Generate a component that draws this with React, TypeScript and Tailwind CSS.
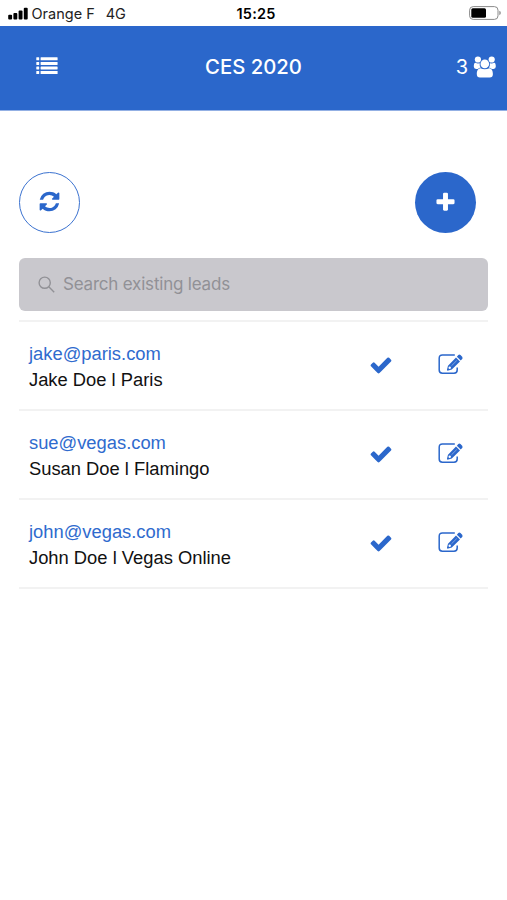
import type { ReactNode } from 'react'

const leads = [
  { email: 'jake@paris.com', name: 'Jake Doe', company: 'Paris' },
  { email: 'sue@vegas.com', name: 'Susan Doe', company: 'Flamingo' },
  { email: 'john@vegas.com', name: 'John Doe', company: 'Vegas Online' },
]

function Icon({ className, children }: { className?: string; children: ReactNode }) {
  return (
    <svg viewBox="0 0 1792 1792" fill="currentColor" className={className}>
      {children}
    </svg>
  )
}

function RefreshIcon() {
  return (
    <Icon className="mb-0.5 size-[23px]">
      <path d="M1639 1056q0 5-1 7-64 268-268 434.5t-478 166.5q-146 0-282.5-55t-243.5-157l-129 129q-19 19-45 19t-45-19-19-45v-448q0-26 19-45t45-19h448q26 0 45 19t19 45-19 45l-137 137q71 66 161 102t187 36q134 0 250-65t186-179q11-17 53-117 8-23 30-23h192q13 0 22.5 9.5t9.5 22.5zm25-800v448q0 26-19 45t-45 19h-448q-26 0-45-19t-19-45 19-45l138-138q-148-137-349-137-134 0-250 65t-186 179q-11 17-53 117-8 23-30 23h-199q-13 0-22.5-9.5t-9.5-22.5v-7q65-268 270-434.5t480-166.5q146 0 284 55.5t245 156.5l130-129q19-19 45-19t45 19 19 45z" />
    </Icon>
  )
}

function PlusIcon() {
  return (
    <Icon className="size-[23px]">
      <path d="M1600 736v192q0 40-28 68t-68 28h-416v416q0 40-28 68t-68 28h-192q-40 0-68-28t-28-68v-416h-416q-40 0-68-28t-28-68v-192q0-40 28-68t68-28h416v-416q0-40 28-68t68-28h192q40 0 68 28t28 68v416h416q40 0 68 28t28 68z" />
    </Icon>
  )
}

function CheckIcon() {
  return (
    <Icon className="size-[24px]">
      <path d="M1671 566q0 40-28 68l-724 724-136 136q-28 28-68 28t-68-28l-136-136-362-362q-28-28-28-68t28-68l136-136q28-28 68-28t68 28l294 295 656-657q28-28 68-28t68 28l136 136q28 28 28 68z" />
    </Icon>
  )
}

function EditIcon() {
  return (
    <svg viewBox="0 0 25 22" className="mb-0.5 h-[22px] w-[25px]" fill="none">
      <path d="M16.8 2H4.4Q1.2 2 1.2 5.2V17Q1.2 20.2 4.4 20.2H16Q19.2 20.2 19.2 17V14.4" stroke="currentColor" strokeWidth="1.5" />
      <path
        d="M9.4 17.6Q8.8 17.4 9 16.6L10 12.7L18 4.4L22 8.4L13.8 16.6L10.3 17.6Q9.7 17.8 9.4 17.6Z"
        fill="currentColor"
      />
      <path d="M18.9 3.7L20.3 2.1Q21.4 1 22.5 2.1L24.2 3.8Q25 5 24.2 6.1L22.7 7.5Z" fill="currentColor" />
      <path d="M13.4 12.9L18.8 7.5" stroke="white" strokeWidth="0.4" />
      <circle cx="11.7" cy="14.8" r="1.2" fill="white" />
    </svg>
  )
}

function ListIcon() {
  return (
    <svg viewBox="0 0 22 18" className="h-[18px] w-[22px]" fill="currentColor">
      {[0.3, 4.9, 9.5, 14.1].map((y) => (
        <g key={y}>
          <rect x="0.3" y={y} width="2.9" height="3" rx="0.4" />
          <rect x="4.6" y={y} width="17" height="3" rx="0.4" />
        </g>
      ))}
    </svg>
  )
}

function GroupIcon() {
  return (
    <svg viewBox="0 0 24 22" className="h-[22px] w-6" fill="currentColor">
      <circle cx="4.9" cy="3.5" r="3.1" />
      <circle cx="18.7" cy="3.5" r="3.1" />
      <path d="M0.8 10.5C0.8 8.3 1.3 6.9 2.4 6.8C3.3 7.3 4.1 7.5 4.9 7.5L6.7 7.2Q6.3 10 7.8 11.5Q6 11.6 4.8 12.9H3.1Q0.8 12.9 0.8 10.5Z" />
      <path d="M22.8 10.5C22.8 8.3 22.3 6.9 21.2 6.8C20.3 7.3 19.5 7.5 18.7 7.5L16.9 7.2Q17.3 10 15.8 11.5Q17.6 11.6 18.8 12.9H20.5Q22.8 12.9 22.8 10.5Z" />
      <circle cx="11.8" cy="7.9" r="4.3" />
      <path d="M7.5 12.2Q9.4 13.3 11.8 13.3Q14.3 13.3 16.2 12.2C19 12.2 19.9 15.4 19.9 18Q19.9 21.5 16.7 21.5H7Q3.8 21.5 3.8 18C3.8 15.4 4.7 12.2 7.5 12.2Z" />
    </svg>
  )
}

function SearchIcon() {
  return (
    <svg viewBox="0 0 17 17" className="size-[17px]" fill="none" stroke="currentColor" strokeWidth="1.4">
      <circle cx="6.7" cy="6.7" r="5.6" />
      <path d="M10.8 10.8L16.2 16.2" />
    </svg>
  )
}

function StatusBar() {
  return (
    <div className="grid h-[26px] grid-cols-3 items-center text-black">
      <div className="flex items-center pt-0.5 pl-2 text-[14.5px] text-[#222]">
        <svg viewBox="0 0 20 13" className="mr-[3.5px] mb-px h-[13px] w-5" fill="black">
          <rect x="0.2" y="7.8" width="3.9" height="4.7" rx="1" />
          <rect x="5.4" y="6" width="3.9" height="6.5" rx="1" />
          <rect x="10.6" y="3.6" width="3.9" height="8.9" rx="1" />
          <rect x="15.8" y="0.8" width="3.9" height="11.7" rx="1" />
        </svg>
        <span>Orange F</span>
        <span className="ml-[11px]">4G</span>
      </div>
      <div className="pt-0.5 pl-[5px] text-center text-[14.5px] font-semibold tracking-[0.2px]">15:25</div>
      <div className="flex justify-end pr-[6px]">
        <svg viewBox="0 0 32 14" className="h-[14px] w-8" fill="none">
          <rect x="0.6" y="0.6" width="28.4" height="12.8" rx="3.6" stroke="#8a8a8a" />
          <rect x="2.3" y="2.3" width="14.7" height="9.4" rx="1.5" fill="black" />
          <path d="M30.3 4.8Q31.8 5.4 31.8 7T30.3 9.2Z" fill="#8a8a8a" />
        </svg>
      </div>
    </div>
  )
}

export default function App() {
  return (
    <div className="h-[900px] w-full overflow-hidden bg-white font-['Inter','Liberation_Sans',sans-serif]">
      <StatusBar />
      <header className="grid h-[85px] grid-cols-3 items-center border-b border-[#93b0e4] bg-[#2b67cb] text-white">
        <button className="pb-1 pl-9">
          <ListIcon />
        </button>
        <h1 className="pb-0.5 text-center text-[20.3px] font-medium">CES 2020</h1>
        <div className="flex items-center justify-end gap-[5px] pr-2.5 pb-0.5 text-[20px]">
          <span>3</span>
          <GroupIcon />
        </div>
      </header>

      <main className="px-[19px] pt-[61px]">
        <div className="flex justify-between pr-3">
          <button className="flex size-[61px] items-center justify-center rounded-full border-[1.5px] border-[#3c73d0] text-[#2b67cb]">
            <RefreshIcon />
          </button>
          <button className="flex size-[61px] items-center justify-center rounded-full bg-[#2b67cb] text-white">
            <PlusIcon />
          </button>
        </div>

        <div className="mt-[25px] flex h-[53px] items-center gap-2 rounded-md bg-[#c9c8cd] pl-[19px] text-[17px] tracking-[-0.2px] text-[#919196]">
          <SearchIcon />
          <span>Search existing leads</span>
        </div>

        <ul className="mt-[9px] border-t-2 border-[#f2f2f2] font-['Liberation_Sans',sans-serif]">
          {leads.map((lead) => (
            <li key={lead.email} className="flex h-[89px] items-center border-b-2 border-[#f2f2f2] pl-2.5">
              <div className="flex-1 pt-0.5 text-[18.35px] leading-[26px]">
                <p className="text-[#2f6bce]">{lead.email}</p>
                <p className="text-[#111]">
                  {lead.name} l {lead.company}
                </p>
              </div>
              <div className="flex items-center gap-[45px] pr-[25px] pb-0.5 text-[#2b67cb]">
                <CheckIcon />
                <EditIcon />
              </div>
            </li>
          ))}
        </ul>
      </main>
    </div>
  )
}
